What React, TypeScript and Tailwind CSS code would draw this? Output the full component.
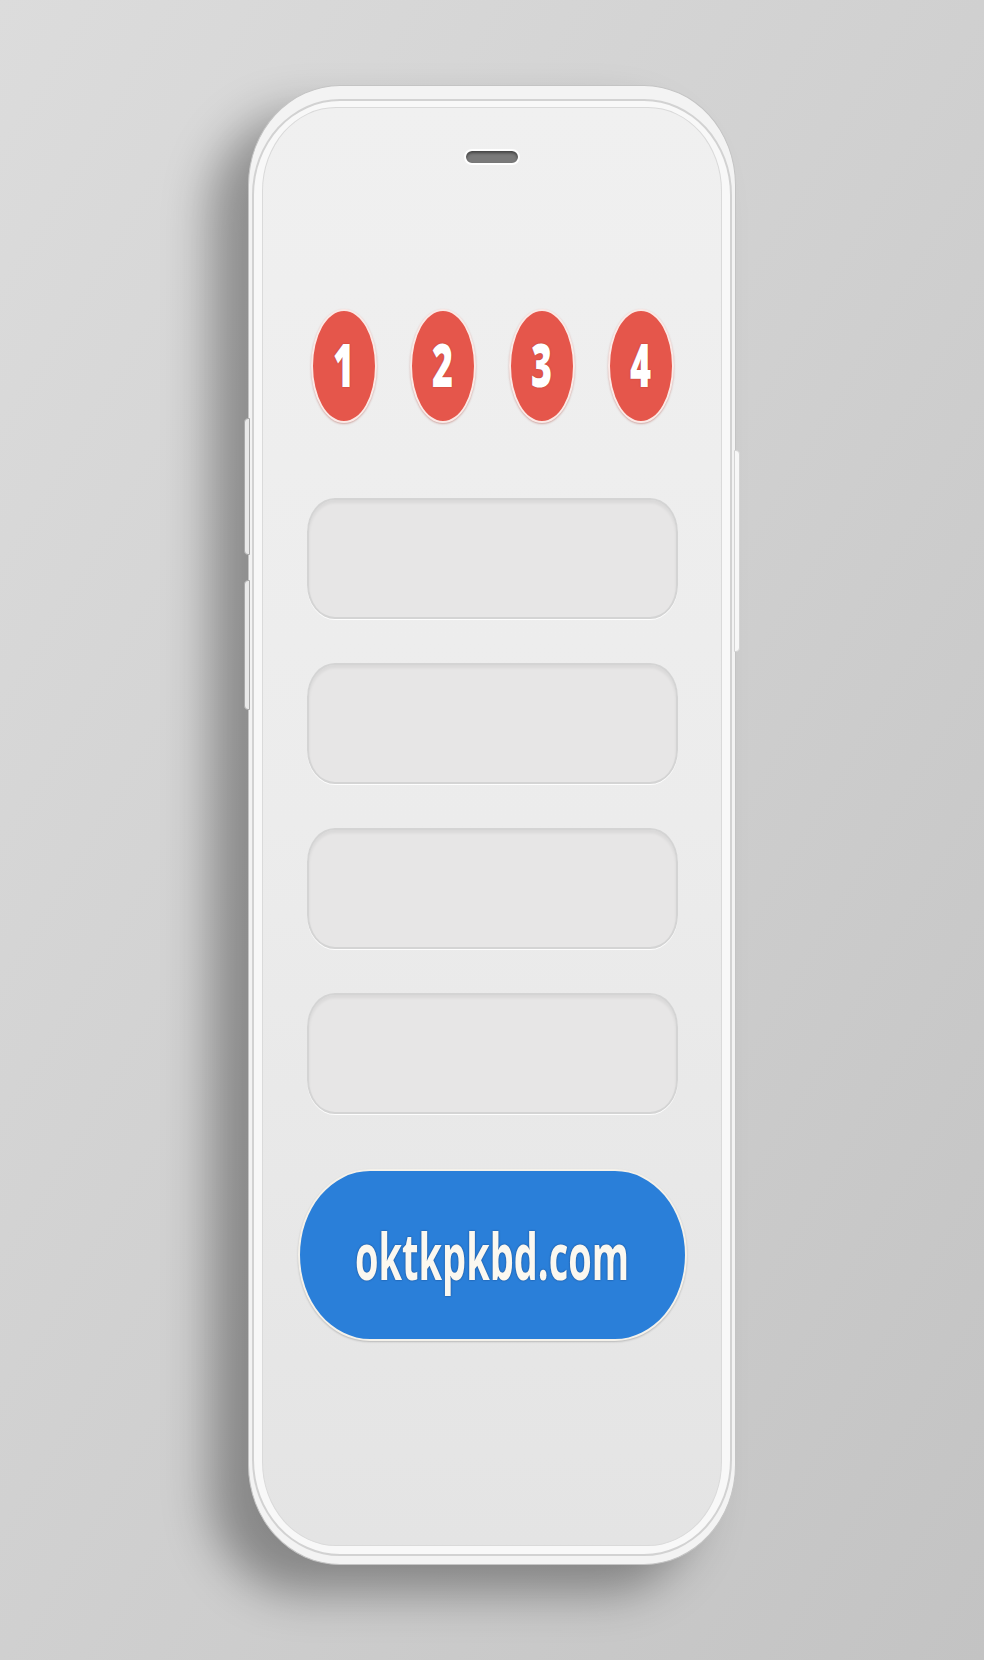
import React from 'react';

const steps = ['1', '2', '3', '4'];
const fields = [0, 1, 2, 3];

const Phone = () => {
  return (
    <div className="relative w-[488px] h-[1480px] rounded-[92px/100px] bg-[#f3f3f3] border border-[#c4c4c4] shadow-[-38px_28px_46px_rgba(0,0,0,0.34)] pt-[13px] pb-[8px] px-[3px]">
      {/* side keys */}
      <div className="absolute left-[-5px] top-[332px] w-[6px] h-[137px] rounded-l-[4px] bg-[#e9e9e9] border border-[#a9a9a9]" />
      <div className="absolute left-[-5px] top-[494px] w-[6px] h-[130px] rounded-l-[4px] bg-[#e9e9e9] border border-[#a9a9a9]" />
      <div className="absolute right-[-5px] top-[364px] w-[6px] h-[202px] rounded-r-[4px] bg-[#f7f7f7] border border-[#d4d4d4]" />

      <div className="w-full h-full rounded-[88px/96px] border-2 border-[#d2d2d2] bg-[#f8f8f8] pt-[6px] pb-[8px] px-[8px]">
        <div className="w-full h-full rounded-[74px/84px] border border-[#dadada] bg-gradient-to-b from-[#f0f0f0] via-[#ececec] to-[#e4e4e4] flex flex-col items-center">
          {/* speaker */}
          <div className="mt-[41px] w-[56px] h-[16px] rounded-full bg-[#7a7a7a] border-2 border-white shadow-[inset_0_2px_3px_rgba(0,0,0,0.45)]" />

          {/* step badges */}
          <div className="mt-[144px] flex gap-[33px]">
            {steps.map((s) => (
              <div
                key={s}
                className="w-[66px] h-[114px] rounded-[50%] bg-[#e5564b] border-2 border-[#fbe9e6] shadow-[0_1px_2px_rgba(150,40,30,0.35)] flex items-center justify-center"
              >
                <span
                  className="block text-[36px] font-extrabold leading-none text-white scale-y-[1.65] [text-shadow:0_0_1px_rgba(120,30,20,0.6)]"
                  style={{ fontFamily: '"Open Sans", "DejaVu Sans", sans-serif' }}
                >
                  {s}
                </span>
              </div>
            ))}
          </div>

          {/* empty fields */}
          <div className="mt-[75px] flex flex-col gap-[44px]">
            {fields.map((f) => (
              <div
                key={f}
                className="w-[371px] h-[121px] rounded-[28px/34px] bg-[#e7e6e6] border-2 border-[#d4d4d4] shadow-[inset_0_3px_3px_rgba(0,0,0,0.06),0_1px_0_rgba(255,255,255,0.9)]"
              />
            ))}
          </div>

          {/* url button */}
          <div className="mt-[55px] w-[389px] h-[172px] rounded-[72px/86px] bg-[#2a7fd9] border-2 border-[#f4f1ea] shadow-[0_1px_2px_rgba(0,0,0,0.2)] flex items-center justify-center">
            <span
              className="block text-[38px] font-bold leading-none text-[#fbf8f0] scale-y-[1.7] [text-shadow:0_0_1.5px_rgba(20,60,120,0.9)]"
              style={{ fontFamily: '"Open Sans", "DejaVu Sans", sans-serif' }}
            >
              oktkpkbd.com
            </span>
          </div>
        </div>
      </div>
    </div>
  );
};

export default function App() {
  return (
    <div className="w-[984px] h-[1660px] overflow-hidden bg-gradient-to-br from-[#dcdcdc] via-[#d0d0d0] to-[#c3c3c3] pl-[248px] pt-[85px]">
      <Phone />
    </div>
  );
}
